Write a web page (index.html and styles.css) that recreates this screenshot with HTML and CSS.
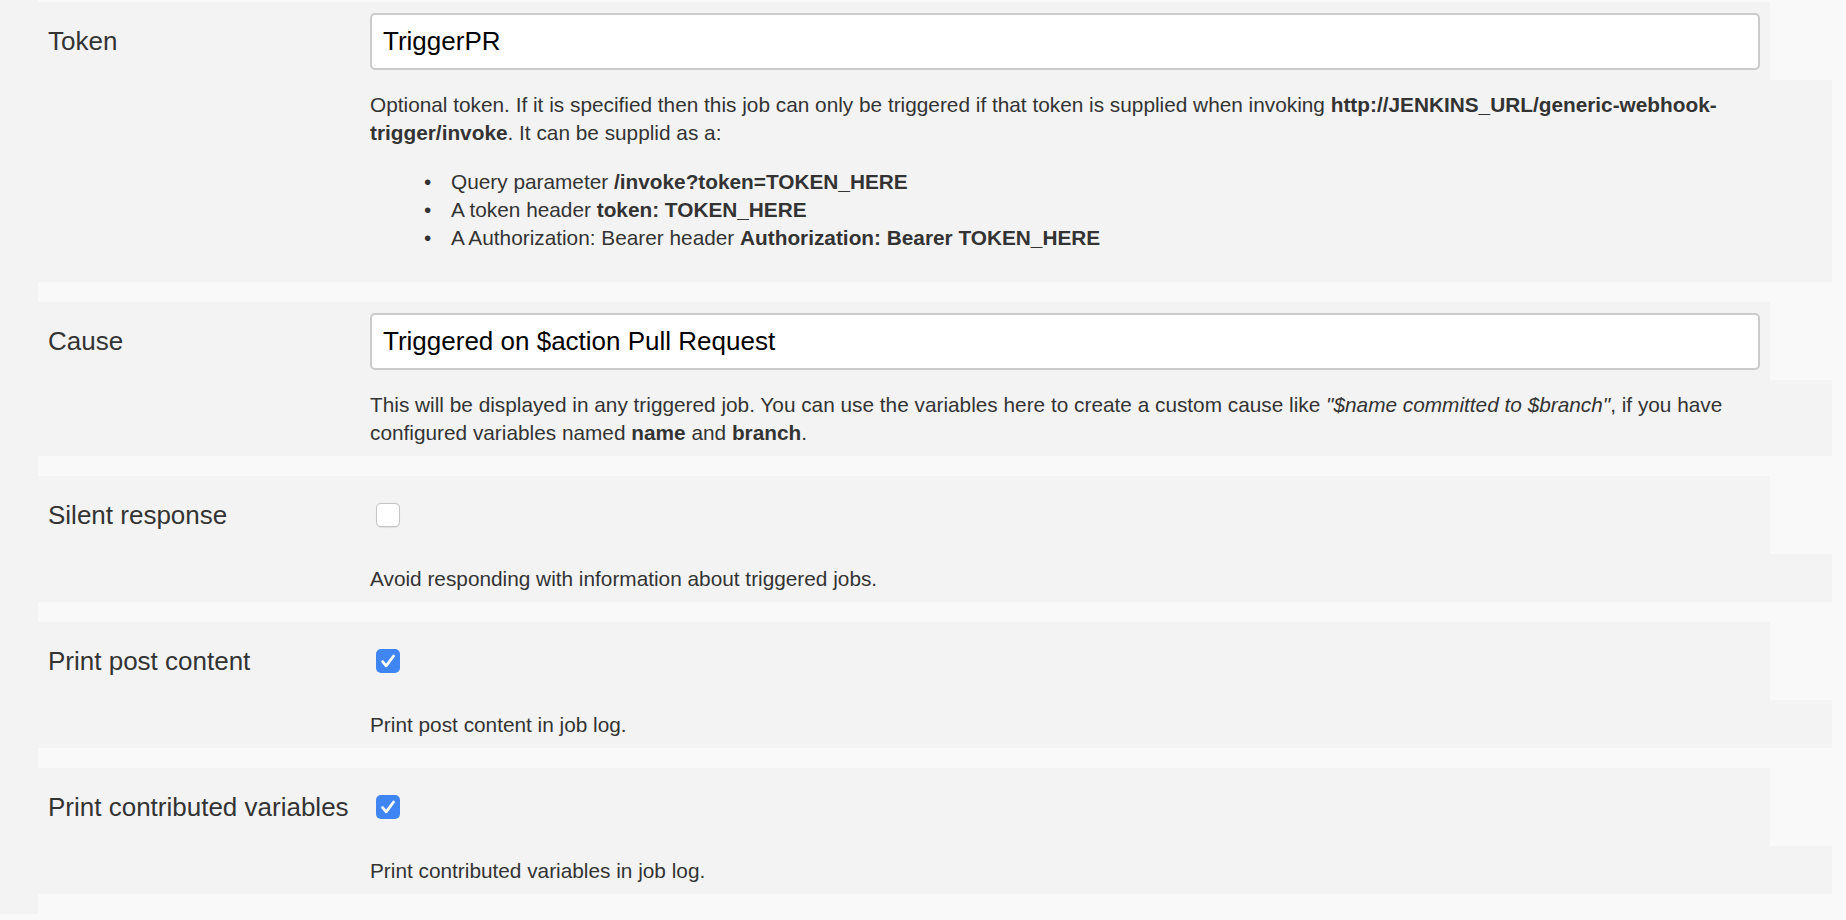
FILE: index.html
```html
<!DOCTYPE html>
<html lang="en">
<head>
<meta charset="utf-8">
<title>Generic Webhook Trigger</title>
<link rel="stylesheet" href="styles.css">
</head>
<body>
<div class="page">
  <div class="side"></div>
  <div class="form">

    <div class="setting">
      <div class="setting-main">
        <div class="setting-name">Token</div>
        <div class="setting-field"><input class="text-input" type="text" value="TriggerPR"></div>
      </div>
      <div class="setting-help">
        <p>Optional token. If it is specified then this job can only be triggered if that token is supplied when invoking <b>http://JENKINS_URL/generic-webhook-trigger/invoke</b>. It can be supplid as a:</p>
        <ul>
          <li>Query parameter <b>/invoke?token=TOKEN_HERE</b></li>
          <li>A token header <b>token: TOKEN_HERE</b></li>
          <li>A Authorization: Bearer header <b>Authorization: Bearer TOKEN_HERE</b></li>
        </ul>
      </div>
    </div>

    <div class="setting">
      <div class="setting-main">
        <div class="setting-name">Cause</div>
        <div class="setting-field"><input class="text-input" type="text" value="Triggered on $action Pull Request"></div>
      </div>
      <div class="setting-help">
        <p>This will be displayed in any triggered job. You can use the variables here to create a custom cause like <i>"$name committed to $branch"</i>, if you have configured variables named <b>name</b> and <b>branch</b>.</p>
      </div>
    </div>

    <div class="setting">
      <div class="setting-main">
        <div class="setting-name">Silent response</div>
        <div class="setting-field"><span class="checkbox"></span></div>
      </div>
      <div class="setting-help">
        <p>Avoid responding with information about triggered jobs.</p>
      </div>
    </div>

    <div class="setting">
      <div class="setting-main">
        <div class="setting-name">Print post content</div>
        <div class="setting-field"><span class="checkbox checked"><svg viewBox="0 0 24 24" width="24" height="24"><path d="M6.6 12.6 L10.2 16.8 L17.6 7" fill="none" stroke="#fff" stroke-width="2.8" stroke-linecap="round" stroke-linejoin="round"/></svg></span></div>
      </div>
      <div class="setting-help">
        <p>Print post content in job log.</p>
      </div>
    </div>

    <div class="setting">
      <div class="setting-main">
        <div class="setting-name">Print contributed variables</div>
        <div class="setting-field"><span class="checkbox checked"><svg viewBox="0 0 24 24" width="24" height="24"><path d="M6.6 12.6 L10.2 16.8 L17.6 7" fill="none" stroke="#fff" stroke-width="2.8" stroke-linecap="round" stroke-linejoin="round"/></svg></span></div>
      </div>
      <div class="setting-help">
        <p>Print contributed variables in job log.</p>
      </div>
    </div>

  </div>
</div>
</body>
</html>
```

FILE: styles.css
```css
html, body {
  margin: 0;
  padding: 0;
  background: #f9f9f9;
  font-family: "Liberation Sans", Arial, Helvetica, sans-serif;
  color: #333;
}

.page {
  display: flex;
  align-items: stretch;
}

.side {
  width: 38px;
  flex: 0 0 38px;
  background: #f3f3f3;
}

.form {
  flex: 1;
  padding-top: 2px;
}

.setting {
  margin-bottom: 20px;
}

.setting-main {
  display: grid;
  grid-template-columns: 332px 1fr;
  align-items: center;
  height: 78px;
  margin-right: 76px;
  background: #f3f3f3;
}

.setting-name {
  padding-left: 10px;
  font-size: 26px;
  color: #333;
  white-space: nowrap;
}

.setting-field {
  display: flex;
  align-items: center;
}

.text-input {
  box-sizing: border-box;
  width: 1390px;
  height: 57px;
  margin: 0;
  padding: 0 11px;
  border: 2px solid #cbcbcb;
  border-radius: 5px;
  background: #fff;
  font-family: "Liberation Sans", Arial, Helvetica, sans-serif;
  font-size: 26px;
  color: #000;
  outline: none;
}

.checkbox {
  box-sizing: border-box;
  display: inline-flex;
  width: 24px;
  height: 24px;
  margin-left: 6px;
  border: 1.5px solid #c4c4c4;
  border-radius: 5px;
  background: #fff;
  box-shadow: 0 0.5px 1px rgba(0, 0, 0, 0.08);
}

.checkbox.checked {
  border: none;
  background: #3f86f4;
  box-shadow: none;
}

.checkbox svg {
  display: block;
}

.setting-help {
  margin-right: 14px;
  padding: 11px 62px 9px 332px;
  background: #f3f3f3;
  font-size: 20.8px;
  line-height: 28px;
  color: #333;
}

.setting-help p {
  margin: 0;
}

.setting-help ul {
  margin: 21px 0;
  padding-left: 81px;
  list-style: none;
}

.setting-help li::before {
  content: "\2022";
  display: inline-block;
  width: 27px;
  margin-left: -27px;
}

.setting-help b {
  font-weight: bold;
}
```
